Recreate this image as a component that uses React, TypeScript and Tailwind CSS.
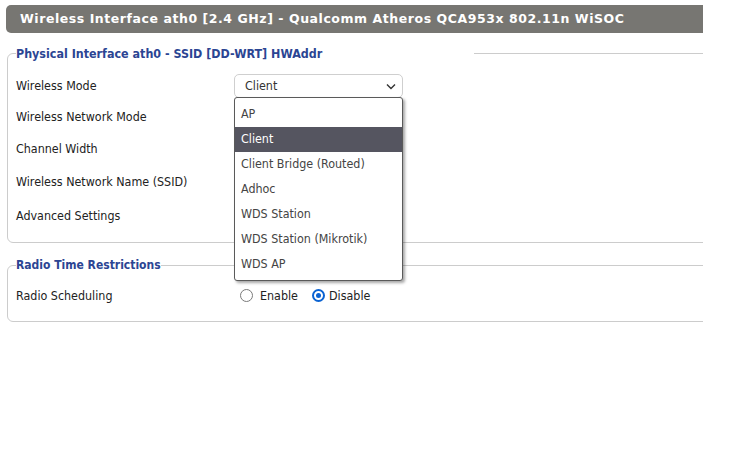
import React from "react";

const body = { fontFamily: '"DejaVu Sans Condensed", "DejaVu Sans", sans-serif' };

function Radio({ checked }: { checked?: boolean }) {
  return checked ? (
    <span className="inline-flex h-[13px] w-[13px] items-center justify-center rounded-full border-[2px] border-[#0b63d2]">
      <span className="h-[5px] w-[5px] rounded-full bg-[#0b63d2]" />
    </span>
  ) : (
    <span className="inline-block h-[13px] w-[13px] rounded-full border-[1.5px] border-[#7a7a7a]" />
  );
}

export default function App() {
  const options = [
    "AP",
    "Client",
    "Client Bridge (Routed)",
    "Adhoc",
    "WDS Station",
    "WDS Station (Mikrotik)",
    "WDS AP",
  ];
  return (
    <div className="relative h-[449px] w-[756px] overflow-hidden bg-white text-[12.4px] text-[#222]" style={body}>
      <div className="ml-[6px] w-[697px] overflow-hidden pt-[5px]">
        <div
          className="flex h-[28px] items-center rounded-l-[5px] bg-[#777672] pl-[14px] text-[12.5px] font-bold tracking-[0.55px] text-white"
          style={{ fontFamily: '"DejaVu Sans", sans-serif' }}
        >
          Wireless Interface ath0 [2.4 GHz] - Qualcomm Atheros QCA953x 802.11n WiSOC
        </div>

        <fieldset className="ml-[1px] mt-[13px] w-[740px] rounded-[6px] border border-[#cccccc] pb-[9px] pl-[8px]">
          <legend className="text-[12.4px] font-bold leading-[15px] text-[#2b4593]">
            Physical Interface ath0 - SSID [DD-WRT] HWAddr
            <span className="inline-block w-[152px]" />
          </legend>
          <div className="pt-[9px]">
            <div className="flex h-[32px] items-center">
              <div className="w-[218px]">Wireless Mode</div>
              <div className="relative flex h-[24px] w-[169px] items-center justify-between rounded-[5px] border border-[#cfcfcf] pl-[10px] pr-[6px] text-[#333]">
                <span>Client</span>
                <svg width="10" height="7" viewBox="0 0 10 7">
                  <polyline points="1,1.5 5,5.5 9,1.5" fill="none" stroke="#333" strokeWidth="1.4" />
                </svg>
              </div>
            </div>
            <div className="flex h-[31px] items-center">Wireless Network Mode</div>
            <div className="flex h-[32px] items-center">Channel Width</div>
            <div className="flex h-[34px] items-center">Wireless Network Name (SSID)</div>
            <div className="flex h-[34px] items-center">Advanced Settings</div>
          </div>
        </fieldset>

        <fieldset className="ml-[1px] mt-[15px] w-[740px] rounded-[6px] border border-[#cccccc] pb-[9px] pl-[8px]">
          <legend className="text-[12px] font-bold leading-[15px] text-[#2b4593]">Radio Time Restrictions</legend>
          <div className="pt-[7px]">
            <div className="flex h-[32px] items-center">
              <div className="w-[224px]">Radio Scheduling</div>
              <div className="flex items-center">
                <Radio />
                <span className="ml-[7px]">Enable</span>
                <span className="ml-[14px] flex items-center">
                  <Radio checked />
                </span>
                <span className="ml-[4px]">Disable</span>
              </div>
            </div>
          </div>
        </fieldset>
      </div>

      <div className="absolute left-[234px] top-[97px] w-[169px] rounded-[3px] border border-[#5a5a5a] bg-white pb-[3px] pt-[4px] shadow-[2px_2px_3px_rgba(0,0,0,0.35)]">
        {options.map((o) => (
          <div
            key={o}
            className={
              "flex h-[25px] items-center pl-[6px] " +
              (o === "Client" ? "bg-[#555560] text-white" : "text-[#444]")
            }
          >
            {o}
          </div>
        ))}
      </div>
    </div>
  );
}
